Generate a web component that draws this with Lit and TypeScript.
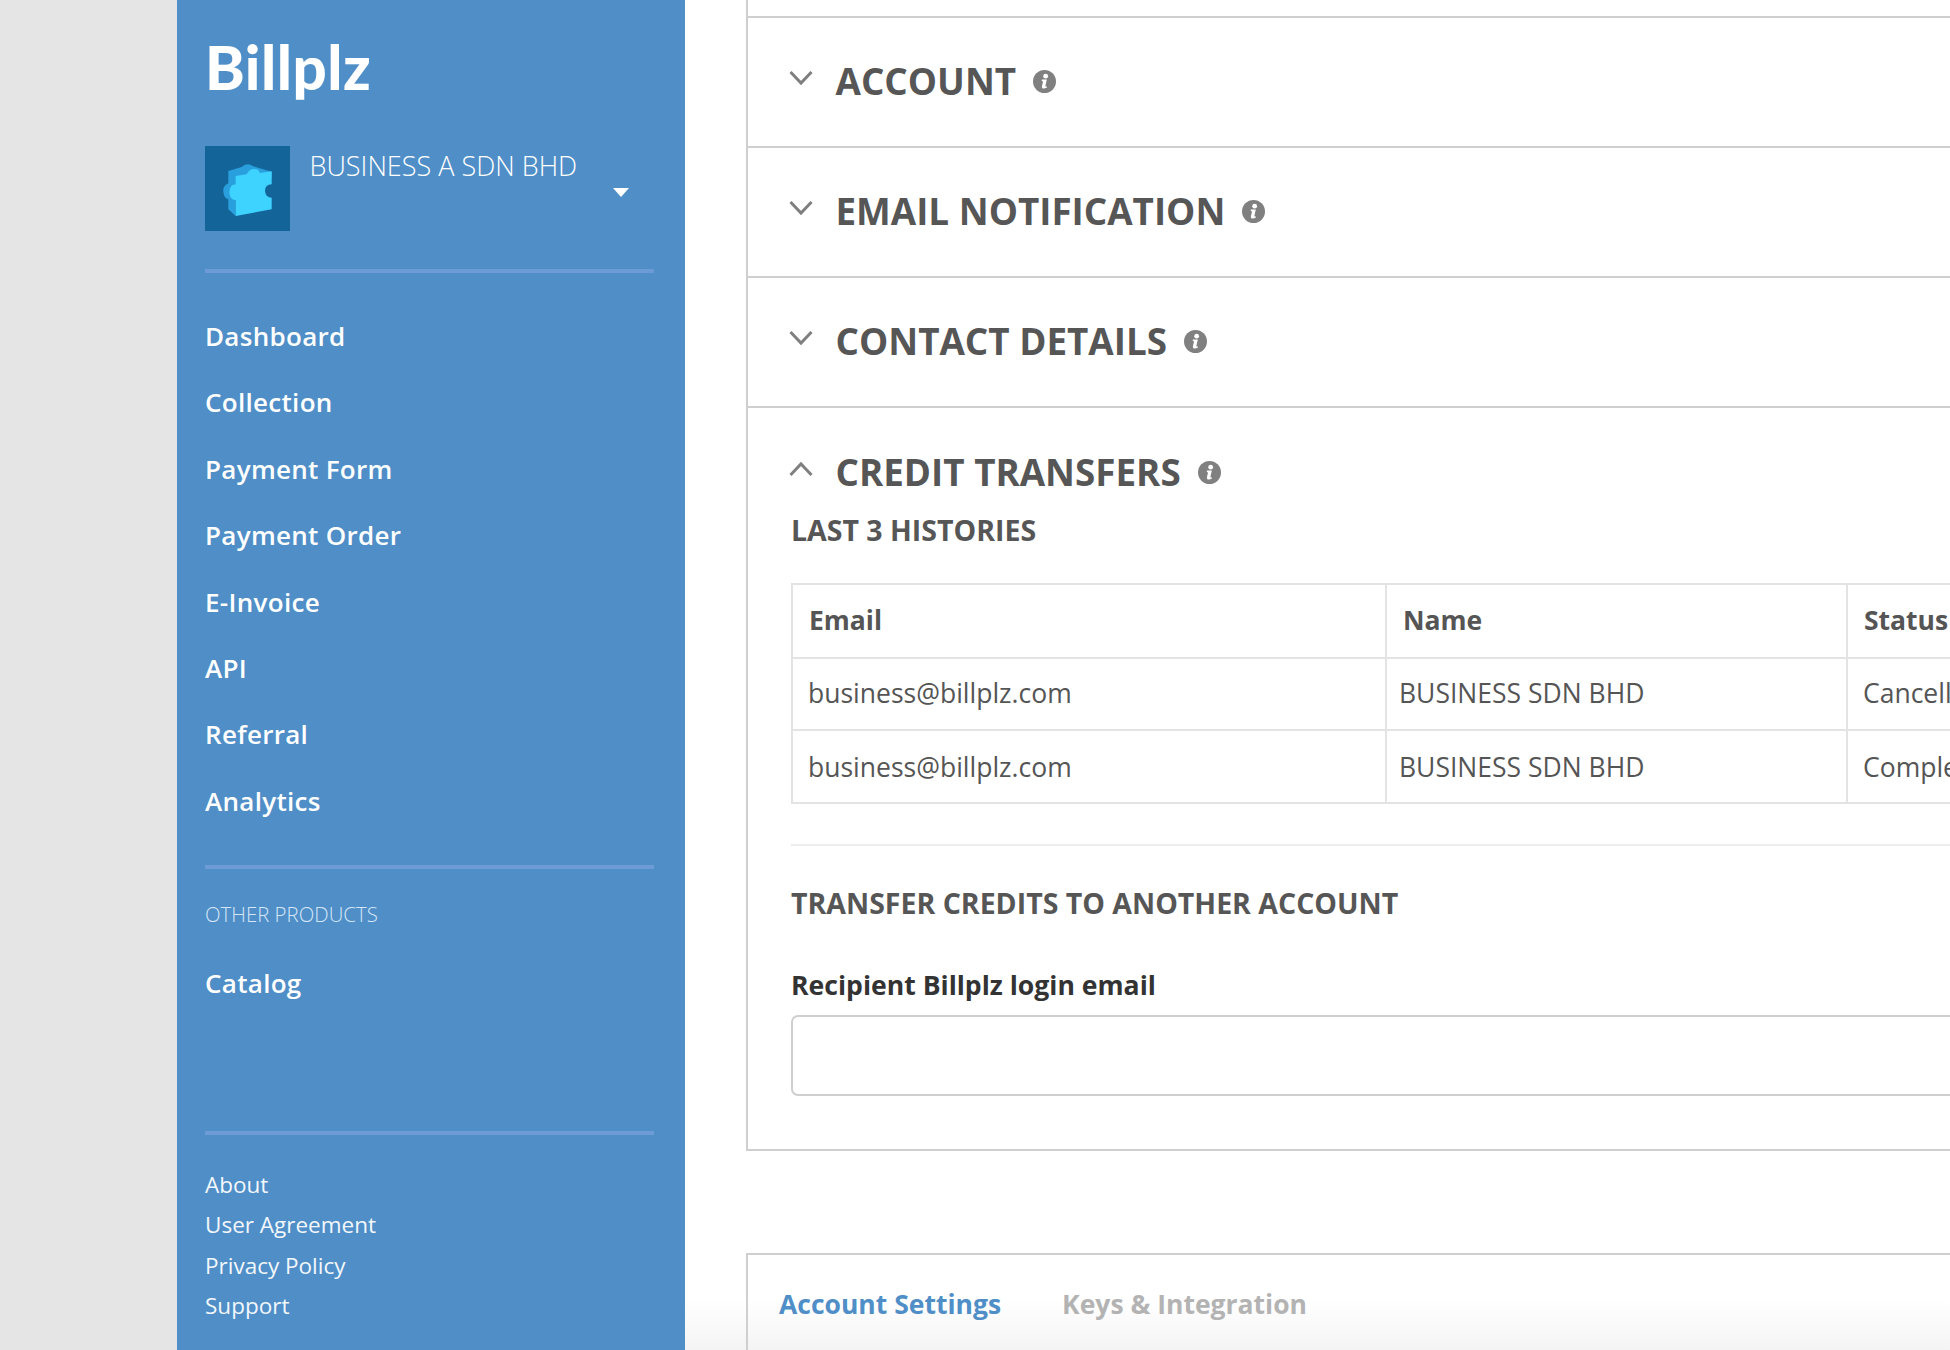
import { LitElement, html, css } from "lit";
import { customElement } from "lit/decorators.js";

const chevron = (up: boolean) => html`<svg class="chev" viewBox="0 0 24 16" width="24" height="16"><path d="${up ? "M1.5 14 L12 3 L22.5 14" : "M1.5 2 L12 13 L22.5 2"}" fill="none" stroke="#7f7f7f" stroke-width="3"/></svg>`;
const info = html`<svg class="info" viewBox="0 0 24 24" width="23" height="25"><ellipse cx="12" cy="12" rx="12" ry="12" fill="#808080"/><circle cx="13.2" cy="6.4" r="2.5" fill="#fff"/><path d="M9.3 10 H14.4 L12.9 16.6 Q12.8 17.5 14.5 17 L14.3 18.6 Q12 19.6 10.1 19.2 Q8.9 18.6 9.3 17 L10.5 11.9 L9.1 11.6Z" fill="#fff"/></svg>`;

@customElement("app-root")
export class AppRoot extends LitElement {
  static styles = css`
    :host { display: flex; width: 1950px; height: 1350px; overflow: hidden; background: #fff; font-family: "Open Sans", "Noto Sans", sans-serif; }
    .gutter { width: 177px; flex: none; background: #e5e5e5; }
    .side { width: 508px; flex: none; background: #4f8ec7; color: #fff; box-sizing: border-box; padding: 0 31px 0 28px; display: flex; flex-direction: column; }
    .logo { font-family: Lato, sans-serif; font-weight: 900; font-size: 60px; line-height: 62px; letter-spacing: 0.5px; margin-top: 36px; height: 110px; }
    .biz { display: flex; height: 85px; }
    .avatar { width: 85px; height: 85px; background: #136498; flex: none; }
    .avatar svg { display: block; }
    .bizname { font-weight: 300; font-size: 27px; line-height: 32px; margin: 4px 0 0 19.5px; flex: 1; white-space: nowrap; }
    .caret { width: 0; height: 0; border-left: 8px solid transparent; border-right: 8px solid transparent; border-top: 9px solid #fff; margin: 42px 25px 0 0; }
    .rule { height: 4px; background: #6c9bd6; flex: none; }
    .r1 { margin-top: 38px; }
    .nav { display: flex; flex-direction: column; margin-top: 30px; }
    .nav a { height: 66.4px; line-height: 66.4px; font-size: 26px; font-weight: 600; letter-spacing: 0.3px; white-space: nowrap; }
    .r2 { margin-top: 31px; }
    .other { font-weight: 300; font-size: 20.4px; line-height: 28px; margin-top: 31px; color: #d5e6f7; }
    .catalog { margin-top: 0; }
    .catalog a { margin-top: 22px; }
    .r3 { margin-top: 114px; }
    .foot { display: flex; flex-direction: column; margin-top: 30px; }
    .foot a { font-size: 22.5px; line-height: 40.6px; height: 40.6px; color: #f2f7fc; }
    .main { flex: none; width: 1265px; height: 1350px; box-sizing: border-box; padding-left: 61px; background: linear-gradient(transparent 1300px, #f4f4f4 1350px); }
    .card { width: 1400px; border: 2px solid #cfcfcf; border-top: none; box-sizing: border-box; background: #fff; }
    .topstrip { height: 16px; border-bottom: 2px solid #cfcfcf; box-sizing: content-box; }
    .sec { height: 128px; border-bottom: 2px solid #cfcfcf; display: flex; align-items: center; padding-left: 41px; }
    .sec.open { height: auto; border-bottom: none; display: block; padding: 0 0 0 43px; }
    .head { display: flex; align-items: center; height: 128px; margin-top: -3px; }
    .open .head { height: 89px; margin-top: 19px; margin-left: -2px; }
    .chev { flex: none; margin-right: 22.5px; margin-top: -6px; }
    h2 { margin: 0; font-size: 36.8px; font-weight: 700; color: #565656; line-height: 44px; white-space: nowrap; }
    .info { margin-left: 17px; flex: none; margin-top: 1px; }
    h3 { margin: 0; font-size: 28.5px; font-weight: 700; color: #565656; line-height: 36px; white-space: nowrap; }
    .last { margin-top: -4px; }
    table { border-collapse: collapse; width: 1229px; margin-top: 35px; table-layout: fixed; font-size: 26.5px; color: #555; font-weight: 400; }
    td, th { border: 2px solid #e3e3e3; padding: 0 0 0 15px; text-align: left; white-space: nowrap; overflow: hidden; }
    th { font-weight: 700; height: 70px; padding-left: 16px; padding-bottom: 2px; font-size: 26.5px; }
    td { height: 71px; }
    tr.first td { height: 67px; padding-bottom: 3px; }
    td.n { padding-left: 12px; }
    td.s { padding-left: 15px; }
    .hr { height: 2px; background: #ececec; margin-top: 40px; }
    .xfer { margin-top: 39px; }
    label { display: block; margin-top: 46px; font-size: 26.6px; line-height: 36px; font-weight: 700; color: #333; white-space: nowrap; }
    .input { height: 81px; box-sizing: border-box; border: 2px solid #cfcfcf; border-radius: 7px; margin-top: 12px; background: #fff; width: 1330px; }
    .pad { height: 53px; }
    .card2 { width: 1400px; margin-top: 102px; height: 120px; border: 2px solid #cfcfcf; border-bottom: none; box-sizing: border-box; display: flex; padding: 29px 0 0 31px; gap: 61px; }
    .tab { font-size: 26.5px; line-height: 40px; font-weight: 700; color: #b3b3b3; white-space: nowrap; }
    .tab.on { color: #4f8ec7; }
  `;

  render() {
    const nav = ["Dashboard", "Collection", "Payment Form", "Payment Order", "E-Invoice", "API", "Referral", "Analytics"];
    const foot = ["About", "User Agreement", "Privacy Policy", "Support"];
    const rows = [["business@billplz.com", "BUSINESS SDN BHD", "Cancelled"], ["business@billplz.com", "BUSINESS SDN BHD", "Completed"]];
    return html`
      <div class="gutter"></div>
      <aside class="side">
        <div class="logo">Billplz</div>
        <div class="biz">
          <div class="avatar">
            <svg viewBox="15 15 255 255" width="85" height="85">
              <path d="M85 90 L125 78 Q140 62 160 76 L215 92 L215 110 L107 130 Z" fill="#2a9fdd"/>
              <path d="M85 90 V127 Q68 135 70 152 Q72 172 85 175 V205 L107 225 V105Z" fill="#2a9fdd"/>
              <path d="M107 105 L140 100 Q150 80 170 85 Q178 88 180 96 L215 91 V130 Q195 130 195 150 Q197 170 215 170 V205 L107 225 V178 Q88 175 88 152 Q90 130 107 130 Z" fill="#3ed2fe"/>
            </svg>
          </div>
          <div class="bizname">BUSINESS A SDN BHD</div>
          <div class="caret"></div>
        </div>
        <div class="rule r1"></div>
        <nav class="nav">${nav.map((n) => html`<a>${n}</a>`)}</nav>
        <div class="rule r2"></div>
        <div class="other">OTHER PRODUCTS</div>
        <nav class="nav catalog"><a>Catalog</a></nav>
        <div class="rule r3"></div>
        <div class="foot">${foot.map((f) => html`<a>${f}</a>`)}</div>
      </aside>
      <main class="main">
        <div class="card">
          <div class="topstrip"></div>
          <section class="sec"><div class="head">${chevron(false)}<h2>ACCOUNT</h2>${info}</div></section>
          <section class="sec"><div class="head">${chevron(false)}<h2>EMAIL NOTIFICATION</h2>${info}</div></section>
          <section class="sec"><div class="head">${chevron(false)}<h2>CONTACT DETAILS</h2>${info}</div></section>
          <section class="sec open">
            <div class="head">${chevron(true)}<h2>CREDIT TRANSFERS</h2>${info}</div>
            <h3 class="last">LAST 3 HISTORIES</h3>
            <table>
              <colgroup><col style="width:594px" /><col style="width:461px" /><col style="width:174px" /></colgroup>
              <tr><th>Email</th><th>Name</th><th>Status</th></tr>
              ${rows.map((r, i) => html`<tr class="${i === 0 ? "first" : "second"}"><td>${r[0]}</td><td class="n">${r[1]}</td><td class="s">${r[2]}</td></tr>`)}
            </table>
            <div class="hr"></div>
            <h3 class="xfer">TRANSFER CREDITS TO ANOTHER ACCOUNT</h3>
            <label>Recipient Billplz login email</label>
            <div class="input"></div>
            <div class="pad"></div>
          </section>
        </div>
        <div class="card2"><span class="tab on">Account Settings</span><span class="tab">Keys &amp; Integration</span></div>
      </main>
    `;
  }
}
